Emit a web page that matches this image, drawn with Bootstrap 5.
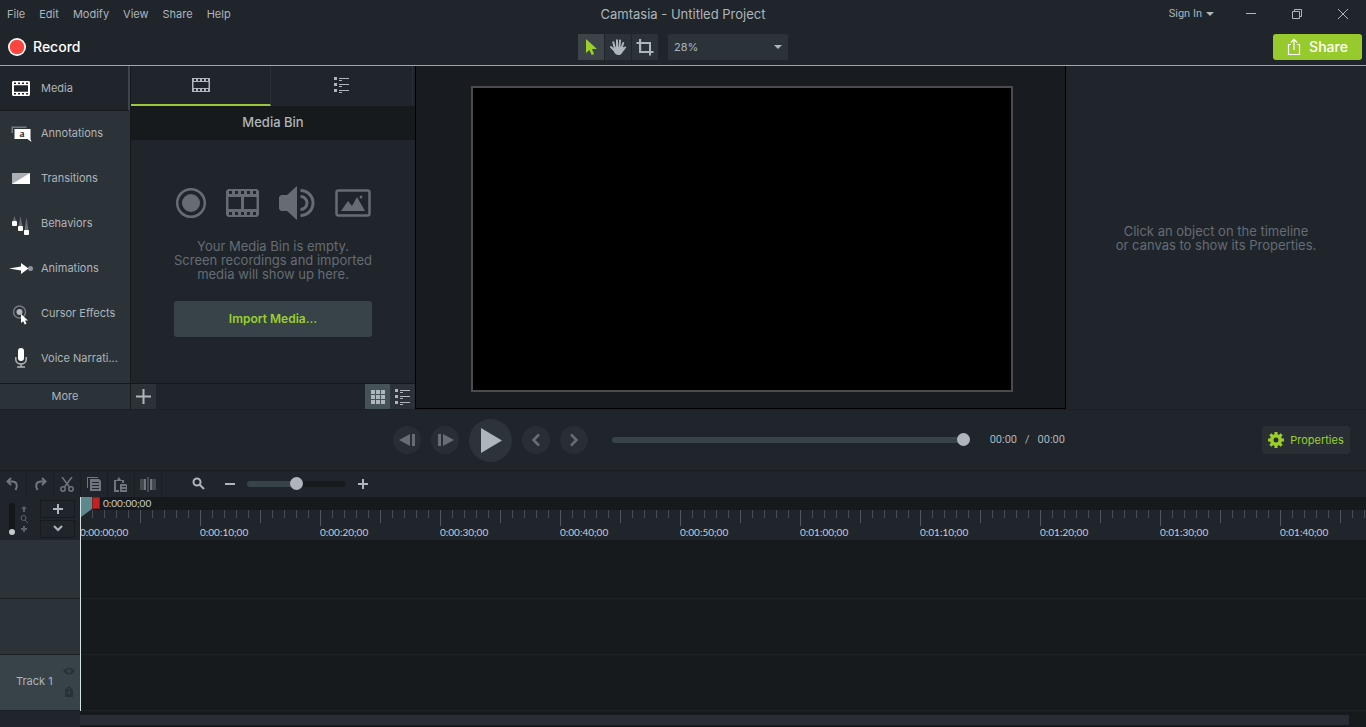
<!DOCTYPE html>
<html lang="en">
<head>
<meta charset="utf-8">
<meta name="viewport" content="width=device-width, initial-scale=1">
<title>Camtasia - Untitled Project</title>
<link rel="stylesheet" href="https://cdn.jsdelivr.net/npm/bootstrap@5.3.0/dist/css/bootstrap.min.css">
<style>
:root{--base:#1f252b;--side:#2b3238;--deep:#161a1c;--canvas:#181b1f;--line:#15191d;--slate:#374348;--lime:#97ca2c;--txt:#aeb5bb;--dim:#666c74}
body{background:var(--base);color:var(--txt);font:11px/14px Inter,"Liberation Sans",sans-serif;min-height:100vh;overflow:hidden}
button,select{font:inherit;color:inherit}
button{background:none;border:0;padding:0}
a{color:inherit;text-decoration:none}
svg{display:block;fill:currentColor;flex:none}
.outline-icon{fill:none;stroke:currentColor}
.bar3{display:grid;grid-template-columns:1fr auto 1fr;align-items:center}
.titlebar{height:28px}
.menu{gap:14px;padding-left:7px}
.win-btn{width:46px;height:28px;display:grid;place-items:center}
.sign-in{font-family:Roboto,sans-serif;margin-right:14px}
.app-title{font-size:13px}
.toolbar{height:38px;padding:0 4px;border-bottom:1px solid #97c33c}
.record{font-size:14px;font-weight:500;color:#fff;padding-left:4px}
.record svg{margin-right:7px}
.share{background:var(--lime);color:#fff;font-size:14px;font-weight:500;width:89px;height:26px;border-radius:3px}
.tools{gap:1px}
.tool{width:26px;height:26px;background:var(--side);display:grid;place-items:center}
.tool.on{background:#3c4349;color:#9bd02b}
.zoom-box{margin-left:9px}
.zoom{width:120px;height:26px;background:var(--side);border:0;border-radius:2px;padding:0 6px;appearance:none}
.caret{position:absolute;right:6px;top:11px;pointer-events:none}
.workspace{min-height:343px}
.sidebar{width:131px;background:var(--side);border-right:1px solid var(--line)}
.side-item{height:45px;padding:0 0 2px 9px;gap:8px}
.side-item svg{width:24px;height:24px}
.side-item.on{background:var(--base);border-right:2px solid #3b454b;border-bottom:1px solid var(--line);padding-bottom:0}
.side-item span{white-space:nowrap}
.more{height:26px;border-top:1px solid var(--line);padding-bottom:2px}
.bin{width:284px}
.bin-tab{width:142px;height:40px;display:grid;place-items:center;border-bottom:2px solid transparent;border-right:1px solid #2b3137}
.bin-tab.on{width:140px;border-bottom-color:#9bc73c}
.bin-head{height:34px;background:var(--deep);font-size:13px;font-weight:500;padding-bottom:2px}
.empty{color:var(--dim);font-size:13px}
.kinds{width:196px;margin-bottom:19px}
.import{width:198px;height:36px;margin-top:20px;background:var(--slate);color:#9bd02b;font-weight:600;font-size:12px;border-radius:3px}
.bin-foot{height:26px;border-top:1px solid var(--line)}
.foot-btn{width:25px;height:25px;background:var(--side);display:grid;place-items:center}
.foot-btn.on{background:#455359}
.viewer{background:var(--canvas);border:1px solid #000;border-top:0;padding:20px 52px 16px 55px}
.stage{background:#000;border:2px solid #4b4a4c}
.props{width:300px;color:var(--dim);font-size:13px}
.player{height:62px;border-top:1px solid #1b2025;border-bottom:1px solid #181c20}
.player-left{width:393px}
.player-right{width:301px}
.transport{gap:10px}
.round{width:28px;height:28px;border-radius:50%;background:#282e34;color:#666d75;display:grid;place-items:center}
.round.big{width:43px;height:43px;background:#2c333a;color:#adb5bd}
.time{font-family:Roboto,sans-serif;gap:8px}
input[type=range]{appearance:none;background:none;margin:0;height:14px}
input[type=range]::-webkit-slider-runnable-track{height:6px;border-radius:3px;background:var(--track,var(--slate))}
input[type=range]::-webkit-slider-thumb{appearance:none;width:13px;height:13px;margin-top:-4px;border-radius:50%;background:#b0b5bb}
input.seek{margin:0 20px 0 24px}
.zoom-range{--track:linear-gradient(90deg,var(--slate) 50%,#171b1d 50%);width:99px}
.prop-btn{width:88px;height:28px;background:#292f35;border-radius:3px;color:#9bd02b;gap:6px}
.edit-bar{height:26px}
.edit{width:27px;height:26px;border-right:1px solid #1a1f24;color:#70767d;display:grid;place-items:center}
.zoom-set{gap:10px;margin-left:29px}
.zoom-set .lens{margin-right:8px}
.heads{width:80px}
.head-tools{height:43px;padding:2px 5px 2px 9px}
.level{width:6px;height:32px;background:#14181a;display:flex;align-items:end;border-radius:2px}
.level i{width:6px;height:6px;border-radius:50%;background:#c5cbd0}
.mini{width:35px;height:18px;border:1px solid #171b1f;display:grid;place-items:center}
.mini-set{gap:2px}
.lanes{background:var(--deep);min-width:0}
.code{font-family:Lato,sans-serif;font-size:10px;color:#c9ced2}
.strip{height:13px;line-height:13px;padding-left:1px}
.flag{width:11px;height:20px;background:#5c898d;clip-path:polygon(0 0,100% 0,100% 60%,0 100%)}
.endmark{width:8px;height:12px;background:#c02326;border:1px solid #851c20;margin-right:3px}
.ruler{height:30px;padding-top:15px;overflow:hidden;background-color:var(--base);
background-image:linear-gradient(90deg,#50575d 1px,transparent 1px),linear-gradient(90deg,#50575d 1px,transparent 1px),linear-gradient(90deg,#454c52 1px,transparent 1px);
background-size:120px 16px,60px 13px,12px 8px;background-repeat:repeat-x}
.ruler span{flex:0 0 120px}
.rows{padding-top:3px}
.track-row{height:56px;border-bottom:1px solid #1e2225}
.head-row{background:var(--side);border-bottom-color:#1b2024}
.head-row.on{background:var(--slate);padding:0 4px 3px 16px}
.head-list{background:var(--side)}
.track-icons{color:#283137}
.track-icons button{color:inherit}
.playhead{position:absolute;left:0;top:0;width:1px;height:214px;background:#d4e2e4}
.scroll{height:16px;padding:4px 17px 2px 0}
.scroll div{height:10px;background:#292c34}
</style>
</head>
<body class="d-flex flex-column">
<header>
 <div class="bar3 titlebar">
  <nav class="d-flex menu" aria-label="Main menu"><a href="#">File</a><a href="#">Edit</a><a href="#">Modify</a><a href="#">View</a><a href="#">Share</a><a href="#">Help</a></nav>
  <div class="app-title">Camtasia - Untitled Project</div>
  <div class="d-flex justify-content-end align-items-center">
   <button class="d-flex align-items-center gap-1 sign-in">Sign In<svg width="8" height="4"><path d="M0 0h8L4 4z"/></svg></button>
   <button class="win-btn" aria-label="Minimize"><svg width="12" height="12"><path d="M1 5h10v1H1z"/></svg></button>
   <button class="win-btn" aria-label="Restore"><svg width="12" height="12" class="outline-icon"><path d="M1.500 3.500h7v7h-7zM3.500 3.500v-2h7v7h-2"/></svg></button>
   <button class="win-btn" aria-label="Close"><svg width="12" height="12" stroke="currentColor"><path d="M1 1l10 10M11 1L1 11"/></svg></button>
  </div>
 </div>
 <div class="bar3 toolbar">
  <button class="record d-flex align-items-center"><svg width="18" height="18"><circle cx="9" cy="9" r="9" fill="#fff"/><circle cx="9" cy="9" r="7.300" fill="#fb4540"/></svg>Record</button>
  <div class="d-flex tools">
   <button class="tool on" aria-label="Select"><svg width="14" height="18"><path d="M2 1v14l3.400-3 2.300 5 2.400-1-2.200-4.900H13z"/></svg></button>
   <button class="tool" aria-label="Pan"><svg width="18" height="18" viewBox="0 0 18 18"><g fill="none" stroke="currentColor" stroke-width="2" stroke-linecap="round"><path d="M5.800 10L4.300 4.300M8 9V2.200M10.400 9l.7-6.600M12.500 10l1.700-5M5.500 12.500L2 9"/></g><path d="M4.800 9l8.700-.5c.6 1.500 2.500.2 3 .1.900-.2 1 .8.300 1.500L13 15c-1 1.500-1.500 2-3.500 2S6 16 5 14z"/></svg></button>
   <button class="tool" aria-label="Crop"><svg width="18" height="18" viewBox="0 0 18 18"><path d="M3 1h2.200v3H15v9h2.500v2H15v2.500h-2V15H3V6H.5V4H3zM5.200 6v7H13V6z" fill-rule="evenodd"/></svg></button>
   <div class="position-relative zoom-box"><select class="zoom" aria-label="Canvas zoom"><option>28%</option></select><svg class="caret" width="8" height="4"><path d="M0 0h8L4 4z"/></svg></div>
  </div>
  <button class="share d-flex align-items-center justify-content-center ms-auto"><svg width="14" height="18" class="outline-icon me-2" stroke-width="1.200"><path d="M4 6.500H1.500v10h11v-10H10M7 12V1.500M3.800 4.500L7 1.300l3.200 3.200"/></svg>Share</button>
 </div>
</header>

<main class="workspace d-flex flex-grow-1">
 <nav class="sidebar d-flex flex-column flex-shrink-0" aria-label="Tools">
  <a href="#" class="side-item on d-flex align-items-center"><svg viewBox="0 0 24 24" color="#fff"><path fill-rule="evenodd" d="M4 5h16l1 1v13l-1 1H4l-1-1V6zM5 6.500V8h2V6.500zm4 0V8h2V6.500zm4 0V8h2V6.500zm4 0V8h2V6.500zM5 17v1.500h2V17zm4 0v1.500h2V17zm4 0v1.500h2V17zm4 0v1.500h2V17zM5 9.300v6.400h14V9.300z"/></svg><span>Media</span></a>
  <a href="#" class="side-item d-flex align-items-center"><svg viewBox="0 0 24 24"><path d="M2.500 12V5.500h15V7H4v5z" fill="#747a80"/><path d="M5.500 8h16v10l1 3-4-3h-13z" fill="#fff"/><text x="13" y="16" font-family="Liberation Serif" font-size="10" font-weight="bold" text-anchor="middle" fill="#2b3238">a</text></svg><span>Annotations</span></a>
  <a href="#" class="side-item d-flex align-items-center"><svg viewBox="0 0 24 24"><path d="M3 7h18v11H3z" fill="#aaafb3"/><path d="M21 7v11H3z" fill="#fff"/></svg><span>Transitions</span></a>
  <a href="#" class="side-item d-flex align-items-center"><svg viewBox="0 0 24 24"><path d="M5.500 5L8 13H3zM11.500 5l2.500 13H9zM17.500 6L20 23h-5z" fill="#666c72"/><rect x="3" y="10" width="5" height="5" rx="1" fill="#fff"/><rect x="9" y="15" width="5" height="5" rx="1" fill="#fff"/><rect x="15" y="19" width="5" height="5" rx="1" fill="#fff"/></svg><span>Behaviors</span></a>
  <a href="#" class="side-item d-flex align-items-center"><svg viewBox="0 0 24 24"><circle cx="21.500" cy="12.500" r="2.500" fill="#90969b"/><path d="M0 12.500l12-2V7l7.500 5.500-7.500 5.500v-3.500z" fill="#fff"/></svg><span>Animations</span></a>
  <a href="#" class="side-item d-flex align-items-center"><svg viewBox="0 0 24 24"><circle cx="10.500" cy="11" r="6" fill="none" stroke="#737a80" stroke-width="1.500"/><circle cx="10.500" cy="11" r="3" fill="#b3b8bc"/><path d="M12 13v9l2.200-1.800 1.500 3.300 1.800-.8-1.500-3.200h3z" fill="#fff"/></svg><span>Cursor Effects</span></a>
  <a href="#" class="side-item d-flex align-items-center"><svg viewBox="0 0 24 24"><rect x="9" y="2" width="6" height="13" rx="3" fill="#fff"/><path d="M6.800 11v2.500a5.200 4.500 0 0010.400 0V11M12 18v3M8 21h8" fill="none" stroke="#aeb4b9" stroke-width="1.500"/></svg><span>Voice Narrati...</span></a>
  <button class="more mt-auto">More</button>
 </nav>

 <section class="bin d-flex flex-column flex-shrink-0">
  <div class="d-flex">
   <button class="bin-tab on" aria-label="Media bin"><svg width="18" height="14" viewBox="0 0 18 14"><path fill-rule="evenodd" d="M0 0h18v14H0zM2 1v2h2V1zm4 0v2h2V1zm4 0v2h2V1zm4 0v2h2V1zM2 11v2h2v-2zm4 0v2h2v-2zm4 0v2h2v-2zm4 0v2h2v-2zM1.500 4v6h15V4z"/></svg></button>
   <button class="bin-tab" aria-label="Library"><svg width="15" height="16"><path d="M0 0h3v3H0zM5 1h10v1H5zM5 3h3v1H5zM0 6h3v3H0zM5 7h10v1H5zM5 9h3v1H5zM0 12h3v3H0zM5 13h10v1H5zM5 15h3v1H5z"/></svg></button>
  </div>
  <div class="bin-head d-flex align-items-center justify-content-center">Media Bin</div>
  <div class="empty flex-grow-1 d-flex flex-column align-items-center justify-content-center text-center">
   <div class="kinds d-flex align-items-center justify-content-between">
    <svg width="32" height="32"><circle cx="16" cy="16" r="13.800" fill="none" stroke="currentColor" stroke-width="2.500"/><circle cx="16" cy="16" r="9"/></svg>
    <svg width="33" height="28" viewBox="0 0 33 28"><path fill-rule="evenodd" d="M2 0h29l2 2v24l-2 2H2l-2-2V2zM3 2v3h3V2zm6 0v3h3V2zm6 0v3h3V2zm6 0v3h3V2zm6 0v3h3V2zM3 23v3h3v-3zm6 0v3h3v-3zm6 0v3h3v-3zm6 0v3h3v-3zm6 0v3h3v-3zM2.500 8v12H15V8zM18 8v12h12.500V8z"/></svg>
    <svg width="38" height="34" viewBox="0 0 38 34"><path d="M1 11l2-2h6l10-9v34L9 25H3l-2-2z"/><path d="M22.500 10.500a6.500 6.500 0 010 13M22.500 4.500a12.500 12.500 0 010 25" fill="none" stroke="currentColor" stroke-width="3"/></svg>
    <svg width="36" height="28"><rect x="1.500" y="1.500" width="33" height="25" rx="2" fill="none" stroke="currentColor" stroke-width="2.500"/><path d="M6 22l7-10 4 5 5-9 8 14z"/><circle cx="26" cy="8" r="1.500"/></svg>
   </div>
   <p class="mb-0">Your Media Bin is empty.<br>Screen recordings and imported<br>media will show up here.</p>
   <button class="import">Import Media...</button>
  </div>
  <div class="bin-foot d-flex">
   <button class="foot-btn me-auto" aria-label="Add media"><svg width="15" height="15"><path d="M6.500 0h2v6.500H15v2H8.500V15h-2V8.500H0v-2h6.500z"/></svg></button>
   <button class="foot-btn on" aria-label="Thumbnails"><svg width="14" height="14"><path d="M0 0h4v4H0zM5 0h4v4H5zM10 0h4v4h-4zM0 5h4v4H0zM5 5h4v4H5zM10 5h4v4h-4zM0 10h4v4H0zM5 10h4v4H5zM10 10h4v4h-4z"/></svg></button>
   <button class="foot-btn" aria-label="Details"><svg width="15" height="16"><path d="M0 0h3v3H0zM5 1h10v1H5zM5 3h3v1H5zM0 6h3v3H0zM5 7h10v1H5zM5 9h3v1H5zM0 12h3v3H0zM5 13h10v1H5zM5 15h3v1H5z"/></svg></button>
  </div>
 </section>

 <section class="viewer flex-grow-1 d-flex"><div class="stage flex-grow-1"></div></section>
 <aside class="props flex-shrink-0 d-flex align-items-center justify-content-center text-center"><p class="mb-0">Click an object on the timeline<br>or canvas to show its Properties.</p></aside>
</main>

<section class="player d-flex align-items-center">
 <div class="player-left flex-shrink-0"></div>
 <div class="d-flex align-items-center flex-grow-1">
  <div class="transport d-flex align-items-center">
   <button class="round" aria-label="Previous frame"><svg width="17" height="14"><path d="M0 7L11 1v12zM13 1h3v12h-3z"/></svg></button>
   <button class="round" aria-label="Next frame"><svg width="17" height="14"><path d="M17 7L6 1v12zM1 1h3v12H1z"/></svg></button>
   <button class="round big" aria-label="Play"><svg width="22" height="25"><path d="M1 0l21 12.500L1 25z"/></svg></button>
   <button class="round" aria-label="Previous marker"><svg width="10" height="14" class="outline-icon" stroke-width="2.500"><path d="M8 1.500L2.500 7 8 12.500"/></svg></button>
   <button class="round" aria-label="Next marker"><svg width="10" height="14" class="outline-icon" stroke-width="2.500"><path d="M2 1.500L7.500 7 2 12.500"/></svg></button>
  </div>
  <input type="range" class="seek flex-grow-1" min="0" max="100" value="100" aria-label="Playback position">
  <div class="time d-flex"><span>00:00</span><span>/</span><span>00:00</span></div>
 </div>
 <div class="player-right flex-shrink-0 d-flex justify-content-end pe-3">
  <button class="prop-btn d-flex align-items-center justify-content-center"><svg width="16" height="16" viewBox="0 0 16 16"><circle cx="8" cy="8" r="4.300" fill="none" stroke="currentColor" stroke-width="3.600"/><path d="M8 0v3M8 13v3M0 8h3M13 8h3M2.300 2.300l2 2M11.700 11.700l2 2M2.300 13.700l2-2M11.700 4.300l2-2" stroke="currentColor" stroke-width="3"/></svg>Properties</button>
 </div>
</section>

<section aria-label="Timeline">
 <div class="edit-bar d-flex align-items-center">
  <button class="edit" aria-label="Undo"><svg width="14" height="14" class="outline-icon" stroke-width="2"><path d="M2 4.500h4c5 0 6 4 3.500 8.500M5 1L1.500 4.500 5 8"/></svg></button>
  <button class="edit" aria-label="Redo"><svg width="14" height="14" class="outline-icon" stroke-width="2"><path d="M12 4.500H8c-5 0-6 4-3.500 8.500M9 1l3.500 3.500L9 8"/></svg></button>
  <button class="edit" aria-label="Cut"><svg width="14" height="15" class="outline-icon" stroke-width="1.500"><path d="M2 0l7.500 10M12 0L4.500 10"/><circle cx="3" cy="12" r="2.200"/><circle cx="11" cy="12" r="2.200"/></svg></button>
  <button class="edit" aria-label="Copy"><svg width="14" height="14"><path d="M0 11V0h11v1H1v10z"/><path fill-rule="evenodd" d="M3 2h9l2 2v10H3zM5 5v1h7V5zm0 3v1h7V8zm0 3v1h7v-1z"/></svg></button>
  <button class="edit" aria-label="Paste"><svg width="14" height="15"><path d="M0 3h3L5 0l2 3h3v3H8V4H2v9h3v2H0z"/><path fill-rule="evenodd" d="M6 7h6l1 1v7H6zM8 9v1h4V9zm0 3v1h4v-1z"/></svg></button>
  <button class="edit" aria-label="Split"><svg width="16" height="15"><path d="M7.500 0h1v15h-1z"/><path d="M0 2h6v11H0zM10 2h6v11h-6z" opacity=".45"/><path d="M4 2h2v11H4zM10 2h2v11h-2z"/></svg></button>
  <div class="zoom-set d-flex align-items-center">
   <svg width="14" height="14" class="outline-icon lens" stroke-width="2"><circle cx="6" cy="5" r="3.500"/><path d="M8.500 7.500L13 12"/></svg>
   <button aria-label="Zoom out"><svg width="14" height="14"><path d="M2 6h10v2H2z"/></svg></button>
   <input type="range" class="zoom-range" min="0" max="100" value="50" aria-label="Timeline zoom">
   <button aria-label="Zoom in"><svg width="14" height="14"><path d="M6 2h2v4h4v2H8v4H6V8H2V6h4z"/></svg></button>
  </div>
 </div>
 <div class="d-flex">
  <div class="heads flex-shrink-0">
   <div class="head-tools d-flex align-items-center">
    <div class="level me-1"><i></i></div>
    <svg width="10" height="26" color="#5b6269" viewBox="0 0 10 26"><path d="M5 0l3 3H6v3H4V3H2zM4 20h2v2h2v2H6v2H4v-2H2v-2h2z"/><circle cx="4.500" cy="12" r="2.500" fill="none" stroke="currentColor"/><path d="M6 14l3 3" stroke="currentColor"/></svg>
    <div class="mini-set d-flex flex-column ms-auto"><button class="mini" aria-label="Add track"><svg width="10" height="10"><path d="M4 0h2v4h4v2H6v4H4V6H0V4h4z"/></svg></button><button class="mini" aria-label="Track options"><svg width="10" height="7" class="outline-icon" stroke-width="2"><path d="M1 1l4 4 4-4"/></svg></button></div>
   </div>
   <div class="head-list rows">
    <div class="track-row head-row"></div><div class="track-row head-row"></div>
    <div class="track-row head-row on d-flex align-items-center"><span>Track 1</span>
     <div class="track-icons d-flex flex-column gap-2 ms-auto"><button aria-label="Show track"><svg width="14" height="12"><path fill-rule="evenodd" d="M1 6q6-7 12 0-6 7-12 0m6-2a2 2 0 100 4 2 2 0 000-4"/></svg></button><button aria-label="Lock track"><svg width="14" height="12"><path fill-rule="evenodd" d="M3 4h1q3-5 6 0h1v8H3zm2.500 0h3q-1.500-2-3 0M6 6v3h2V6z"/></svg></button></div>
    </div>
   </div>
  </div>
  <div class="lanes flex-grow-1 position-relative">
   <div class="strip d-flex code"><div class="flag"></div><div class="endmark"></div>0:00:00;00</div>
   <div class="ruler d-flex code"><span>0:00:00;00</span><span>0:00:10;00</span><span>0:00:20;00</span><span>0:00:30;00</span><span>0:00:40;00</span><span>0:00:50;00</span><span>0:01:00;00</span><span>0:01:10;00</span><span>0:01:20;00</span><span>0:01:30;00</span><span>0:01:40;00</span></div>
   <div class="rows"><div class="track-row"></div><div class="track-row"></div><div class="track-row"></div></div>
   <div class="playhead"></div>
  </div>
 </div>
 <div class="d-flex"><div class="heads flex-shrink-0"></div><div class="scroll flex-grow-1 lanes"><div></div></div></div>
</section>
<script src="https://cdn.jsdelivr.net/npm/bootstrap@5.3.0/dist/js/bootstrap.bundle.min.js"></script>
</body>
</html>
